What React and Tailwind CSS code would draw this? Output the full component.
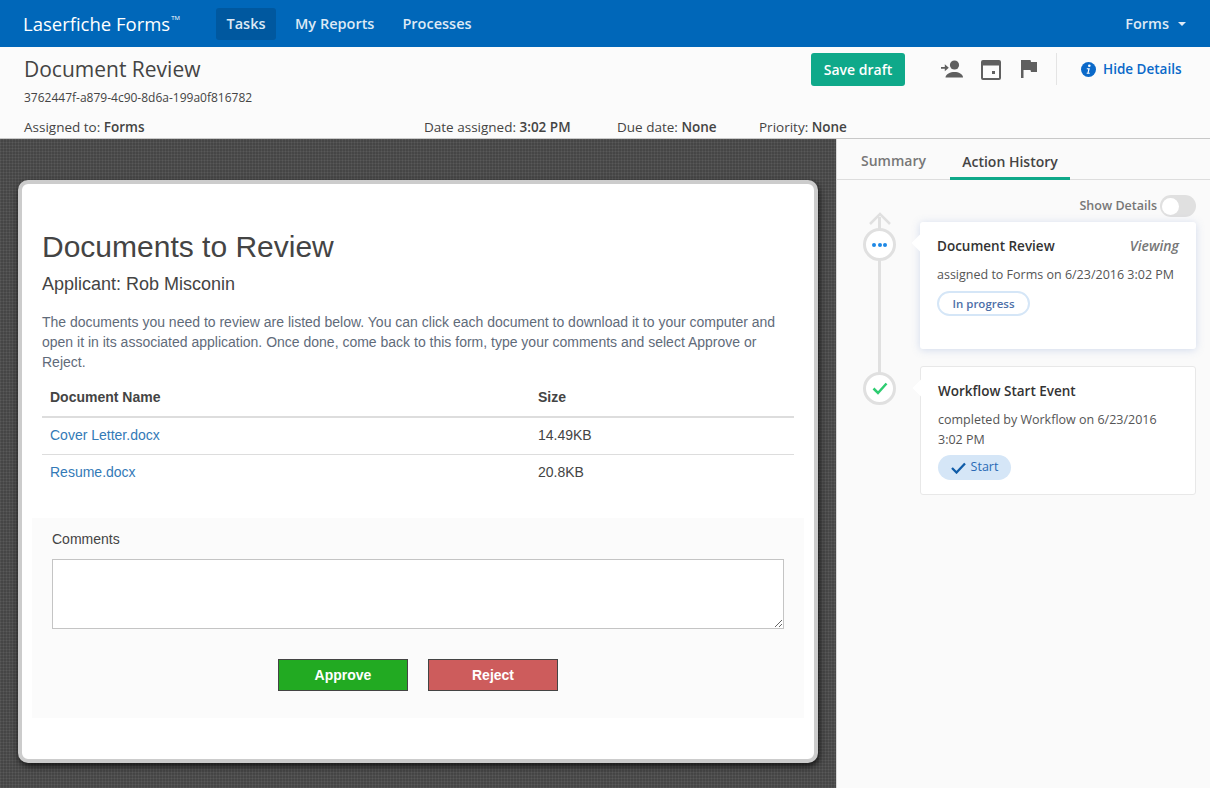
import React from "react";

const sans = "font-['Open_Sans',sans-serif]";

function PersonArrow() {
  return (
    <svg width="22" height="18" viewBox="0 0 22 18" className="fill-[#5f5f5f]">
      <circle cx="13.5" cy="5" r="4.6" />
      <path d="M4.5 17.5c0-3.6 5-5.6 9-5.6s8.500 2 8.500 5.600z" />
      <path d="M0 6.900h3.800V4.300L7.800 7.800 3.800 11.300V8.700H0z" />
    </svg>
  );
}

function CalendarIcon() {
  return (
    <svg width="20" height="20" viewBox="0 0 20 20" className="fill-[#5f5f5f]">
      <path d="M2 0h16a2 2 0 0 1 2 2v16a2 2 0 0 1-2 2H2a2 2 0 0 1-2-2V2a2 2 0 0 1 2-2zm0 5.500V18h16V5.500z" />
      <rect x="11" y="11" width="3" height="3" />
    </svg>
  );
}

function FlagIcon() {
  return (
    <svg width="16" height="18" viewBox="0 0 16 18" className="fill-[#5f5f5f]">
      <path d="M0 0h9.500l.5 2h6v10h-6l-.5-2H2.500v8H0z" />
    </svg>
  );
}

function InfoIcon() {
  return (
    <svg width="15" height="15" viewBox="0 0 15 15">
      <circle cx="7.500" cy="7.500" r="7.500" fill="#0a69c9" />
      <circle cx="8.300" cy="3.700" r="1.300" fill="#fff" />
      <path d="M5.800 6.300h3l-1.100 4.400h1v1H5.700v-1h.8l.7-3.400h-1.400z" fill="#fff" />
    </svg>
  );
}

function TimelineDot({ children }) {
  return (
    <div className="w-[33px] h-[33px] rounded-full border-[3px] border-[#e0e0e0] bg-white flex items-center justify-center shrink-0">
      {children}
    </div>
  );
}

function HistoryCard({ title, aside, text, raised, children }) {
  return (
    <div className={`relative w-[276px] ml-[5px] bg-white rounded-[3px] px-[17px] pt-[13px] ${raised ? "h-[127px] shadow-[0_1px_8px_rgba(120,150,210,0.3)]" : "h-[129px] border border-[#e8e8e8]"}`}>
      <div className="absolute -left-[6px] top-[15px] w-3 h-3 rotate-45 bg-white" />
      <div className="flex items-center justify-between">
        <span className="text-[13.500px] leading-[22px] font-semibold text-[#333]">{title}</span>
        {aside && <span className="text-[14px] leading-[22px] italic font-semibold text-[#777]">{aside}</span>}
      </div>
      <p className="mt-[8px] text-[12.500px] leading-[20px] text-[#555]">{text}</p>
      {children}
    </div>
  );
}

export default function App() {
  return (
    <div className={`${sans} w-[1210px] h-[788px] overflow-hidden flex flex-col bg-[#fbfbfb]`}>
      {/* Nav */}
      <div className="h-[47px] shrink-0 bg-[#0067b9] flex items-center text-[#dde9f5] font-semibold text-[14.500px]">
        <div className="ml-[23px] w-[193px] text-[18.500px] font-normal text-white flex items-start">
          Laserfiche Forms<span className="text-[6px] leading-[8px] mt-[4px] ml-[1px]">TM</span>
        </div>
        <div className="h-[32px] w-[60px] bg-[#00589f] rounded-[3px] flex items-center justify-center">Tasks</div>
        <div className="ml-[19px]">My Reports</div>
        <div className="ml-[28px]">Processes</div>
        <div className="ml-auto mr-[24px] flex items-center gap-[9px]">
          Forms
          <div className="w-0 h-0 border-x-[4px] border-x-transparent border-t-[4px] border-t-[#dde9f5]" />
        </div>
      </div>

      {/* Header */}
      <div className="h-[92px] shrink-0 border-b border-[#c8c8c8] px-[24px] text-[#444] relative">
        <div className="flex h-[44px]">
          <div className="pt-[8px] text-[21px] leading-[29px] text-[#444] w-[787px]">Document Review</div>
          <div className="mt-[6px] w-[94px] h-[33px] rounded-[3px] bg-[#0fa98a] text-white font-semibold text-[14px] flex items-center justify-center">Save draft</div>
          <div className="ml-[36px] mt-[13px] flex items-start gap-[18px] h-[20px]">
            <PersonArrow />
            <CalendarIcon />
            <div className="ml-[2px]"><FlagIcon /></div>
          </div>
          <div className="ml-[19px] mt-[6px] h-[32px] border-l border-[#e4e4e4]" />
          <div className="ml-[24px] mt-[6px] h-[32px] flex items-center gap-[7px] text-[#0a69c9] font-semibold text-[13.500px]">
            <InfoIcon />
            Hide Details
          </div>
        </div>
        <div className="text-[12px] leading-[16px] -mt-[1px] text-[#444]">3762447f-a879-4c90-8d6a-199a0f816782</div>
        <div className="mt-[11px] flex text-[13.500px] leading-[20px]">
          <div className="w-[400px]">Assigned to: <b className="font-semibold">Forms</b></div>
          <div className="w-[193px]">Date assigned: <b className="font-semibold">3:02 PM</b></div>
          <div className="w-[142px]">Due date: <b className="font-semibold">None</b></div>
          <div>Priority: <b className="font-semibold">None</b></div>
        </div>
      </div>

      <div className="flex flex-1 min-h-0">
        {/* Form area */}
        <div className="w-[836px] shrink-0 pl-[18px] pt-[41px] bg-[#4d4d4d] bg-[repeating-linear-gradient(0deg,rgba(255,255,255,0.035)_0_1px,rgba(0,0,0,0.05)_1px_3px),repeating-linear-gradient(90deg,rgba(255,255,255,0.035)_0_1px,rgba(0,0,0,0.05)_1px_3px)]">
          <div className="w-[800px] h-[583px] bg-white border-[4px] border-[#cccccc] rounded-[10px] shadow-[1px_3px_6px_rgba(0,0,0,0.75)] font-['Liberation_Sans',sans-serif] text-[#555]">
            <div className="px-[20px] pt-[45px]">
              <h1 className="text-[30px] leading-[36px] text-[#444]">Documents to Review</h1>
              <div className="mt-[7px] text-[18px] leading-[24px] text-[#444]">Applicant: Rob Misconin</div>
              <p className="mt-[16px] text-[14px] leading-[20px] text-[#5f6b7a] w-[752px]">
                The documents you need to review are listed below. You can click each document to download it to your computer and open it in its associated application. Once done, come back to this form, type your comments and select Approve or Reject.
              </p>
              <table className="mt-[7px] w-[752px] text-[14px] text-[#444] border-collapse">
                <thead>
                  <tr className="h-[38px] border-b-2 border-[#dddddd] font-bold text-left">
                    <th className="pl-[8px] w-[488px]">Document Name</th>
                    <th className="pl-[8px]">Size</th>
                  </tr>
                </thead>
                <tbody>
                  <tr className="h-[37px] border-b border-[#dddddd]">
                    <td className="pl-[8px] text-[#337ab7]">Cover Letter.docx</td>
                    <td className="pl-[8px]">14.49KB</td>
                  </tr>
                  <tr className="h-[37px]">
                    <td className="pl-[8px] text-[#337ab7]">Resume.docx</td>
                    <td className="pl-[8px]">20.8KB</td>
                  </tr>
                </tbody>
              </table>
            </div>
            <div className="mt-[27px] ml-[10px] w-[772px] h-[200px] bg-[#fbfbfb] px-[20px] pt-[11px]">
              <div className="text-[14px] leading-[20px] text-[#444]">Comments</div>
              <textarea className="block mt-[10px] w-[732px] h-[70px] bg-white border border-[#c4c4c4] outline-none" />
              <div className="mt-[30px] flex justify-center gap-[20px]">
                <div className="w-[130px] h-[32px] bg-[#22aa22] border border-[#444] text-white font-bold text-[14px] flex items-center justify-center">Approve</div>
                <div className="w-[130px] h-[32px] bg-[#cd5c5c] border border-[#444] text-white font-bold text-[14px] flex items-center justify-center">Reject</div>
              </div>
            </div>
          </div>
        </div>

        {/* Side panel */}
        <div className="flex-1 border-l border-[#d8d8d8] bg-[#fafafa]">
          <div className="h-[41px] border-b border-[#dddddd] flex items-end pl-[24px] text-[14px] font-semibold">
            <div className="w-[89px] h-[38px] pt-[10px] text-[#777] leading-[20px]">Summary</div>
            <div className="w-[120px] h-[38px] pt-[10px] leading-[20px] text-center text-[#444] border-b-[3px] border-[#0fa98a] -mb-px">Action History</div>
          </div>
          <div className="flex justify-end items-center gap-[3px] pr-[14px] mt-[15px] h-[22px]">
            <span className="text-[12.500px] font-semibold text-[#777]">Show Details</span>
            <div className="w-[36px] h-[22px] rounded-full bg-[#e0e0e0] flex items-center pl-[2px]">
              <div className="w-[17px] h-[17px] rounded-full bg-white" />
            </div>
          </div>
          <div className="relative pl-[26px] pt-[5px]">
            {/* line and arrow behind the dots */}
            <div className="absolute left-[41px] top-[0px] w-[3px] h-[170px] bg-[#e0e0e0]" />
            <svg width="24" height="14" viewBox="0 0 24 14" fill="none" stroke="#e0e0e0" strokeWidth="2.500" className="absolute left-[31px] top-[-5px]">
              <path d="M2 12 L12 2 L22 12" />
            </svg>
            <div className="relative flex">
              <div className="mt-[6px] w-[52px] shrink-0 ml-0">
                <TimelineDot>
                  <div className="flex gap-[1.500px]">
                    <span className="w-1 h-1 rounded-full bg-[#1e88e5]" />
                    <span className="w-1 h-1 rounded-full bg-[#1e88e5]" />
                    <span className="w-1 h-1 rounded-full bg-[#1e88e5]" />
                  </div>
                </TimelineDot>
              </div>
              <HistoryCard raised title="Document Review" aside="Viewing" text="assigned to Forms on 6/23/2016 3:02 PM">
                <div className="mt-[6px] w-[93px] h-[25px] rounded-full border-2 border-[#d5e6f7] text-[11.500px] font-semibold text-[#4d6fa8] flex items-center justify-center">In progress</div>
              </HistoryCard>
            </div>
            <div className="relative flex mt-[17px]">
              <div className="mt-[6px] w-[52px] shrink-0">
                <TimelineDot>
                  <svg width="16" height="13" viewBox="0 0 16 13" fill="none" stroke="#2ecc71" strokeWidth="2.500">
                    <path d="M1.500 6.500 L6 11 L14.500 1.500" />
                  </svg>
                </TimelineDot>
              </div>
              <HistoryCard title="Workflow Start Event" text="completed by Workflow on 6/23/2016 3:02 PM">
                <div className="mt-[5px] w-[73px] h-[25px] rounded-full bg-[#d5e6f7] text-[12.500px] text-[#2a6ab5] flex items-center justify-center gap-[5px]">
                  <svg width="15" height="12" viewBox="0 0 15 12" fill="none" stroke="#0f5ca8" strokeWidth="2.300">
                    <path d="M1 6 L5.500 10.500 L14 1.500" />
                  </svg>
                  Start
                </div>
              </HistoryCard>
            </div>
          </div>
        </div>
      </div>
    </div>
  );
}
